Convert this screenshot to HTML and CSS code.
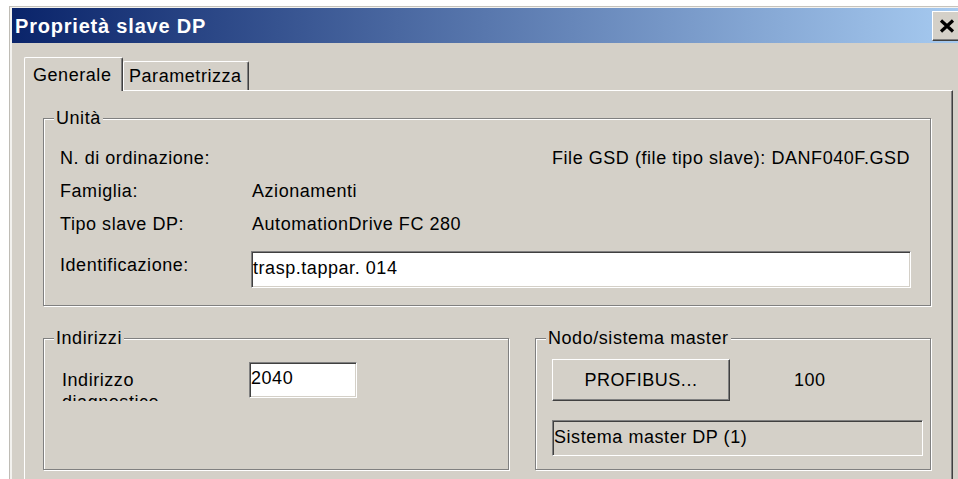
FILE: index.html
```html
<!DOCTYPE html>
<html lang="it">
<head>
<meta charset="utf-8">
<title>Proprietà slave DP</title>
<link rel="stylesheet" href="styles.css">
</head>
<body>
<div class="window">
  <div class="titlebar">
    <span class="title">Proprietà slave DP</span>
    <div class="close" role="button" aria-label="Chiudi">
      <svg width="16" height="14" viewBox="0 0 16 14"><path d="M2 1.5 L14 12.5 M14 1.5 L2 12.5" stroke="#000" stroke-width="3.2" fill="none"/></svg>
    </div>
  </div>
  <div class="dialog">
    <div class="tabs">
      <div class="tab tab-active">Generale</div>
      <div class="tab tab-param">Parametrizza</div>
    </div>
    <div class="panel">
      <div class="group group-unit">
        <div class="legend">Unità</div>
        <div class="unit-rows">
          <div class="row"><span class="label">N. di ordinazione:</span><span class="gsd">File GSD (file tipo slave): DANF040F.GSD</span></div>
          <div class="row"><span class="label">Famiglia:</span><span class="value">Azionamenti</span></div>
          <div class="row"><span class="label">Tipo slave DP:</span><span class="value">AutomationDrive FC 280</span></div>
          <div class="row row-id"><span class="label">Identificazione:</span><div class="field field-id">trasp.tappar. 014</div></div>
        </div>
      </div>
      <div class="bottom-row">
        <div class="group group-addr">
          <div class="legend">Indirizzi</div>
          <div class="addr-body">
            <div class="addr-label">Indirizzo diagnostico</div>
            <div class="field field-addr">2040</div>
          </div>
        </div>
        <div class="group group-node">
          <div class="legend">Nodo/sistema master</div>
          <div class="node-body">
            <div class="node-top">
              <div class="btn">PROFIBUS...</div>
              <span class="node-num">100</span>
            </div>
            <div class="field field-master">Sistema master DP (1)</div>
          </div>
        </div>
      </div>
    </div>
  </div>
</div>
</body>
</html>
```

FILE: styles.css
```css
html, body {
  margin: 0;
  background: #fff;
  overflow: hidden;
}

body {
  font-family: "Liberation Sans", Arial, sans-serif;
  font-size: 18px;
  letter-spacing: 0.55px;
  color: #000;
}

/* classic window frame */
.window {
  margin: 6px 0 0 9px;
  width: 960px;
  height: 480px;
  border-top: 1px solid #c6c3bc;
  border-left: 1px solid #bfbcb5;
  padding: 1px 0 0 2px;
  background: #d4d0c8;
  box-shadow: inset 2px 1px 0 #f3f2ef;
}

.titlebar {
  display: flex;
  justify-content: space-between;
  align-items: flex-start;
  height: 35px;
  padding: 0 0 0 3px;
  background: linear-gradient(to right, #0a246a 0, #a6caf0 946px);
  color: #fff;
}

.title {
  font-weight: bold;
  font-size: 20px;
  letter-spacing: 0.8px;
  line-height: 35px;
  margin-top: 1px;
  white-space: nowrap;
}

.close {
  box-sizing: border-box;
  display: flex;
  align-items: center;
  margin-top: 3px;
  width: 40px;
  height: 30px;
  padding-left: 6px;
  background: #d4d0c8;
  border: 1px solid;
  border-color: #fff #404040 #404040 #fff;
  box-shadow: inset 0 -1px 0 #808080;
}

.dialog {
  padding: 14px 0 0 12px;
}

/* tab strip */
.tabs {
  display: flex;
  align-items: flex-end;
  height: 33px;
}

.tab {
  box-sizing: border-box;
  height: 29px;
  border: 1px solid;
  border-color: #fff #404040 transparent #fff;
  border-bottom: 0;
  border-radius: 2px 2px 0 0;
  box-shadow: inset -1px 0 0 #808080;
  padding: 3px 0 0 5px;
  line-height: 22px;
  white-space: nowrap;
  background: #d4d0c8;
}

.tab-active {
  width: 99px;
  height: 34px;
  margin-bottom: -1px;
  padding: 6px 0 0 8px;
  position: relative;
  z-index: 1;
}

.tab-param {
  width: 126px;
}

.panel {
  box-sizing: border-box;
  width: 929px;
  height: 400px;
  border-top: 1px solid #fff;
  border-left: 1px solid #fff;
  border-right: 1px solid #404040;
  box-shadow: inset -1px 0 0 #808080;
  padding: 27px 0 0 18px;
}

/* etched group boxes */
.group {
  box-sizing: border-box;
  border: 1px solid #808080;
  box-shadow: inset 1px 1px 0 #fff, 1px 1px 0 #fff;
}

.legend {
  display: table;
  margin: -12px 0 0 10px;
  padding: 0 2px;
  line-height: 22px;
  background: #d4d0c8;
}

.group-unit {
  width: 888px;
  height: 188px;
}

.unit-rows {
  padding: 13px 0 0 16px;
}

.row {
  display: flex;
  height: 33px;
  line-height: 33px;
  white-space: nowrap;
}

.label {
  width: 192px;
  flex: none;
}

.gsd {
  margin-left: 300px;
}

.row-id {
  margin-top: 10px;
  height: 37px;
  align-items: flex-start;
}

.row-id .label {
  line-height: 28px;
}

/* sunken edit fields */
.field {
  box-sizing: border-box;
  border: 1px solid;
  border-color: #808080 #fff #fff #808080;
  box-shadow: inset 1px 1px 0 #404040, inset -1px -1px 0 #d4d0c8;
  background: #fff;
  padding-left: 1px;
  white-space: nowrap;
}

.field-id {
  width: 660px;
  height: 37px;
  margin-left: -1px;
  line-height: 33px;
}

.bottom-row {
  display: flex;
  gap: 26px;
  margin-top: 32px;
}

.group-addr {
  width: 466px;
  height: 132px;
}

.group-node {
  width: 396px;
  height: 132px;
}

.addr-body {
  display: flex;
  align-items: flex-start;
  padding-left: 18px;
}

/* the static control is shorter than its two-line caption */
.addr-label {
  width: 130px;
  height: 32px;
  margin: 20px 57px 0 0;
  overflow: hidden;
  line-height: 22px;
}

.field-addr {
  width: 108px;
  height: 36px;
  margin-top: 13px;
  line-height: 30px;
}

.node-body {
  padding: 10px 0 0 16px;
}

.node-top {
  display: flex;
  align-items: center;
}

.btn {
  box-sizing: border-box;
  width: 178px;
  height: 42px;
  border: 1px solid;
  border-color: #fff #404040 #404040 #fff;
  box-shadow: inset -1px -1px 0 #808080;
  background: #d4d0c8;
  text-align: center;
  line-height: 40px;
}

.node-num {
  margin-left: 64px;
}

.field-master {
  width: 371px;
  height: 36px;
  margin-top: 19px;
  background: #d4d0c8;
  line-height: 32px;
}
```
